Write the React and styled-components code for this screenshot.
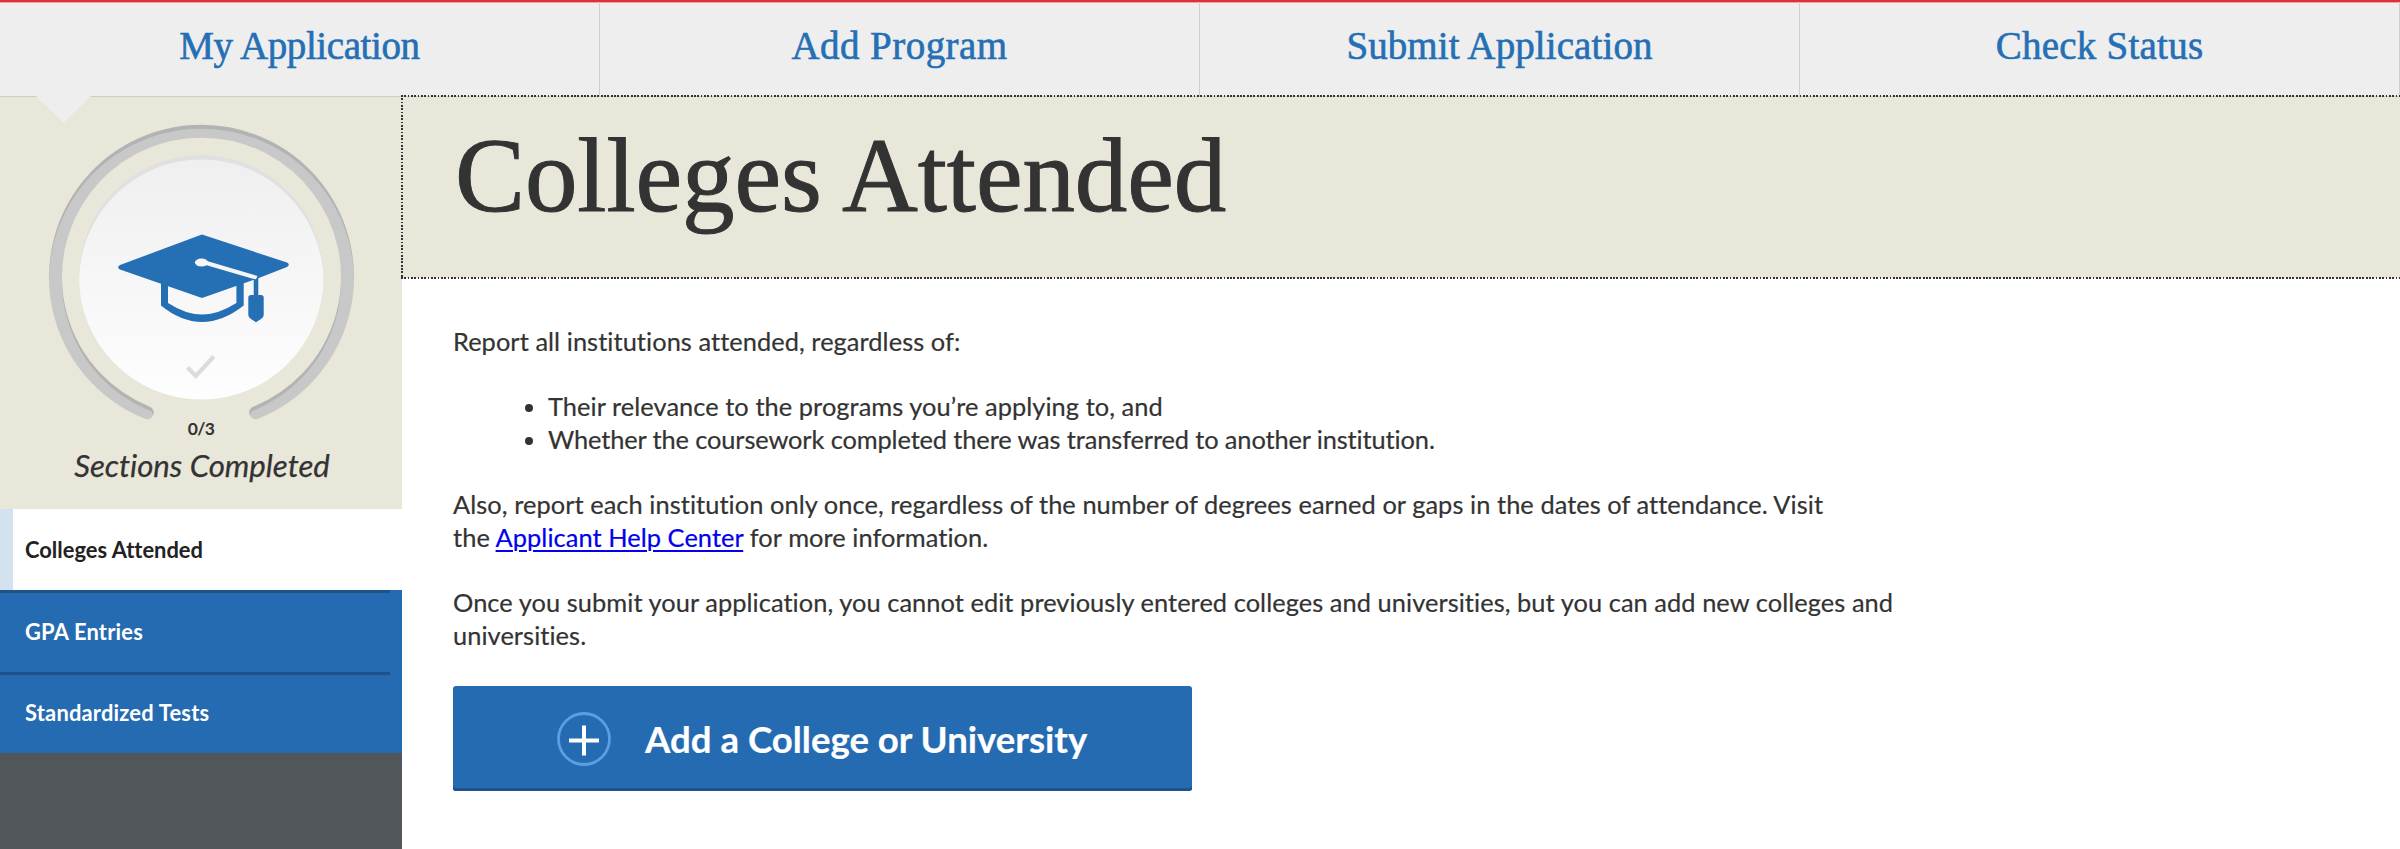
import styled, { createGlobalStyle } from "styled-components";

const tabs = [
  { name: "My Application", spacing: "-0.4px" },
  { name: "Add Program", spacing: "0.45px" },
  { name: "Submit Application", spacing: "0.1px" },
  { name: "Check Status", spacing: "0.25px" },
];

const sections = [
  { name: "Colleges Attended", spacing: "0px" },
  { name: "GPA Entries", spacing: "0.2px" },
  { name: "Standardized Tests", spacing: "0.2px" },
];

export default function App() {
  return (
    <>
      <GlobalStyle />
      <Page>
        <Nav>
          {tabs.map((tab) => (
            <Tab key={tab.name} href="#" $spacing={tab.spacing}>
              {tab.name}
            </Tab>
          ))}
        </Nav>
        <Main>
          <Sidebar>
            <Progress>
              <Pointer />
              <ProgressBadge />
              <Count>0/3</Count>
              <Caption>Sections Completed</Caption>
            </Progress>
            {sections.map((section, index) => (
              <Section
                key={section.name}
                href="#"
                $active={index === 0}
                $spacing={section.spacing}
              >
                {section.name}
              </Section>
            ))}
          </Sidebar>
          <Content>
            <Hero>
              <Title>Colleges Attended</Title>
            </Hero>
            <Body>
              <Text>Report all institutions attended, regardless of:</Text>
              <Bullets>
                <li>Their relevance to the programs you’re applying to, and</li>
                <TightItem>
                  Whether the coursework completed there was transferred to
                  another institution.
                </TightItem>
              </Bullets>
              <Text>
                Also, report each institution only once, regardless of the
                number of degrees earned or gaps in the dates of attendance.
                Visit
                <br />
                the <Link href="#">Applicant Help Center</Link> for more
                information.
              </Text>
              <Text>
                Once you submit your application, you cannot edit previously
                entered colleges and universities, but you can add new colleges
                and
                <br />
                universities.
              </Text>
              <AddButton>
                <PlusIcon />
                Add a College or University
              </AddButton>
            </Body>
          </Content>
        </Main>
      </Page>
    </>
  );
}

function ProgressBadge() {
  const ring = "M147.3 412.7 A146 146 0 1 1 255.7 412.7";
  return (
    <Badge viewBox="40 120 323 302">
      <defs>
        <linearGradient id="disc" x1="0" y1="0" x2="0" y2="1">
          <stop offset="0" stopColor="#efefef" />
          <stop offset="1" stopColor="#fefefe" />
        </linearGradient>
        <mask id="ringMask" maskUnits="userSpaceOnUse" x="40" y="120" width="323" height="302">
          <path d={ring} fill="none" stroke="#fff" strokeWidth="13" strokeLinecap="round" />
        </mask>
        <clipPath id="discClip">
          <circle cx="201.3" cy="277.3" r="122.3" />
        </clipPath>
      </defs>
      <g mask="url(#ringMask)">
        <rect x="40" y="120" width="323" height="302" fill="#b3b3b3" />
        <path
          d={ring}
          transform="translate(0 4)"
          fill="none"
          stroke="#c8c8c8"
          strokeWidth="13"
          strokeLinecap="round"
        />
      </g>
      <g clipPath="url(#discClip)">
        <circle cx="201.3" cy="277.3" r="122.3" fill="#e0e0e0" />
        <circle cx="201.3" cy="281.8" r="122.3" fill="url(#disc)" />
      </g>
      <g fill="#256fb5">
        <path d="M200.5 235 Q202 234.2 203.5 235 L287 262.6 Q290.6 264.6 287 267 L257.5 278.6 L203.5 297.4 Q202 298 200.5 297.4 L120 269.6 Q116.2 267.4 120 265 Z" />
        <path d="M161 282 V305.6 Q181 322 202 322 Q223 322 243.7 305.6 V282 H236.4 V303 Q218 314.6 202 314.6 Q186 314.6 168 303 V282 Z" />
        <path d="M253.7 277.5 H258.3 V295 H261 Q263.7 295 263.7 297.5 V315 Q263.7 317.5 261 319 L256 322.3 L251 319 Q248.3 317.5 248.3 315 V297.5 Q248.3 295 251 295 H253.7 Z" />
      </g>
      <ellipse cx="201.5" cy="262.5" rx="6.6" ry="4" fill="#f6f6f6" />
      <path d="M207 261 L257.5 276 L256 279.3 L252 278.6 L204 264.5 Z" fill="#f6f6f6" />
      <path d="M187.5 367.5 L195.8 376 L213.8 356.5" fill="none" stroke="#dcdcdc" strokeWidth="4.3" />
    </Badge>
  );
}

function PlusIcon() {
  return (
    <svg width="54" height="54" viewBox="0 0 54 54" fill="none">
      <circle cx="27" cy="27" r="25.5" stroke="#5b9fdf" strokeWidth="2.8" />
      <path d="M27 13.500 V43.500 M12 28.500 H42" stroke="#ffffff" strokeWidth="4" />
    </svg>
  );
}

const GlobalStyle = createGlobalStyle`
  * {
    box-sizing: border-box;
  }

  body {
    margin: 0;
    background: #ffffff;
    color: #333333;
    font-family: "Lato", sans-serif;
    font-variant-ligatures: none;
  }
`;

const Page = styled.div`
  display: flex;
  flex-direction: column;
  height: 849px;
  overflow: hidden;
`;

const Nav = styled.nav`
  display: flex;
  height: 97px;
  flex-shrink: 0;
  background: #eeeeee;
  border-top: 2px solid #e02f3b;
  border-bottom: 1px solid #cccccc;
  box-shadow: inset 0 1px 0 #f0a3a8;
`;

const Tab = styled.a`
  flex: 1;
  padding-top: 21px;
  border-right: 1px solid #cfcfcf;

  color: #256fb5;
  text-align: center;
  text-decoration: none;
  font-family: "Liberation Serif", serif;
  font-size: 39px;
  line-height: 45px;
  letter-spacing: ${(props) => props.$spacing};
  -webkit-text-stroke: 0.6px #256fb5;
`;

const Main = styled.main`
  display: flex;
  flex: 1;
`;

const Sidebar = styled.aside`
  width: 402px;
  flex-shrink: 0;
  background: #51565b;
`;

const Progress = styled.div`
  position: relative;
  display: flex;
  flex-direction: column;
  align-items: center;
  height: 412px;
  padding-top: 23px;
  background: #e8e7d9;
`;

/* notch hanging from the selected tab */
const Pointer = styled.div`
  position: absolute;
  top: -1px;
  left: 36px;
  width: 55px;
  height: 27px;
  background: #eeeeee;
  clip-path: polygon(0 0, 100% 0, 50% 100%);
`;

const Badge = styled.svg`
  width: 323px;
  height: 302px;
  flex-shrink: 0;
`;

const Count = styled.div`
  margin-top: -4px;
  font-size: 17.5px;
  font-weight: 700;
  line-height: 21px;
  letter-spacing: -0.7px;
`;

const Caption = styled.div`
  margin: 7px 0 0 2px;
  font-size: 31.2px;
  font-style: italic;
  line-height: 38px;
  -webkit-text-stroke: 0.25px #333333;
`;

const Section = styled.a`
  display: flex;
  align-items: center;
  height: 81.4px;
  padding-left: ${(props) => (props.$active ? "12px" : "25px")};
  border-left: ${(props) => (props.$active ? "13px solid #d2e2ef" : "none")};
  background: ${(props) =>
    props.$active
      ? "#ffffff"
      : "linear-gradient(#1f5388, #1f5388) 0 0 / 390px 3px no-repeat #256bb1"};

  color: ${(props) => (props.$active ? "#222222" : "#ffffff")};
  text-decoration: none;
  font-size: 21.9px;
  font-weight: 700;
  letter-spacing: ${(props) => props.$spacing};
`;

const Content = styled.section`
  flex: 1;
`;

const Hero = styled.header`
  position: relative;
  height: 181px;
  padding: 19px 0 0 53px;
  background: #e8e7d9;

  &::before {
    content: "";
    position: absolute;
    inset: -2px 0 -1px -1px;
    background:
      repeating-linear-gradient(90deg, #333 0 1.8px, transparent 1.8px 3.33px) 0 0 / 100% 2px no-repeat,
      repeating-linear-gradient(90deg, #333 0 1.8px, transparent 1.8px 3.33px) 0 100% / 100% 2px no-repeat,
      repeating-linear-gradient(180deg, #333 0 1.8px, transparent 1.8px 3.33px) 0 0 / 2px 100% no-repeat;
  }
`;

const Title = styled.h1`
  margin: 0;
  font-family: "Liberation Serif", serif;
  font-size: 105px;
  font-weight: 400;
  line-height: 120px;
  letter-spacing: -0.1px;
  -webkit-text-stroke: 1px #333333;
`;

const Body = styled.div`
  padding: 47px 0 0 51px;
  font-size: 25.4px;
  line-height: 33px;
  letter-spacing: 0.06px;
  white-space: nowrap;
  -webkit-text-stroke: 0.2px;
`;

const Text = styled.p`
  margin: 0 0 32px;
`;

const Bullets = styled.ul`
  margin: 0 0 32px;
  padding-left: 95px;
`;

const TightItem = styled.li`
  letter-spacing: -0.12px;
`;

const Link = styled.a`
  color: #0000ee;
  text-decoration-thickness: 1.5px;
  text-underline-offset: 3px;
`;

const AddButton = styled.button`
  display: flex;
  align-items: center;
  gap: 34px;
  width: 739px;
  height: 105px;
  margin-top: 34px;
  padding: 0 0 0 104px;
  border: none;
  border-radius: 3px;
  background: #256bb1;
  box-shadow: inset 0 -3px 0 #1d528a;

  cursor: pointer;

  color: #ffffff;
  font-family: "Lato", sans-serif;
  font-size: 36.6px;
  font-weight: 700;
`;
